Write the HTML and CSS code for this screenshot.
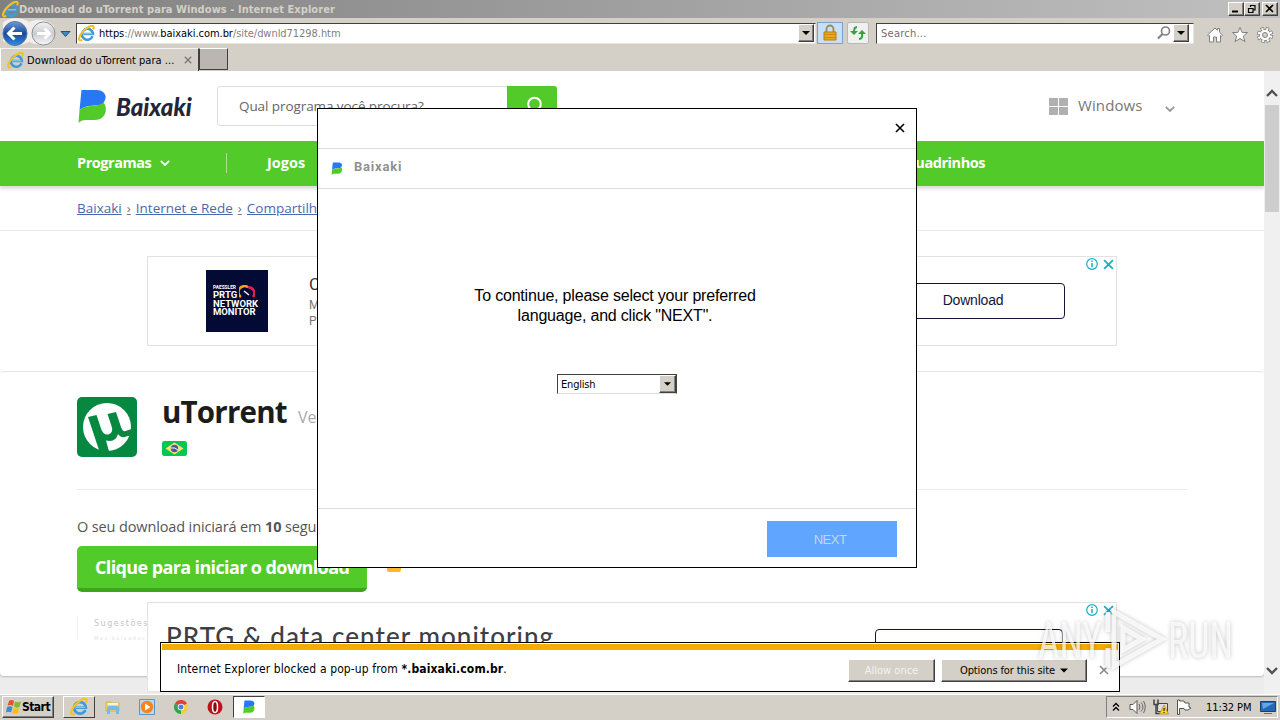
FILE: index.html
```html
<!DOCTYPE html>
<html lang="pt-BR">

<head>
    <meta charset="UTF-8">
    <meta name="viewport" content="width=device-width, initial-scale=1.0">
    <title>Download do uTorrent para Windows</title>
    <link rel="stylesheet" href="styles.css">
</head>

<body>
    <!-- shared icons -->
    <svg class="defs" width="0" height="0">
        <symbol id="ie" viewBox="0 0 18 18">
            <path d="M15.4 12A5.800 5.800 0 1 1 15.8 9.600H6" fill="none" stroke="#3f9bdc" stroke-width="2.700"/>
            <path d="M15 9.300H6" stroke="#9bd6f5" stroke-width="1"/>
            <path d="M4.500 15.800C-.5 18.2.3 12.700 4.600 7.700 9 2.500 15.200-.6 16.400 1.500c.5.9.2 2-.4 3.200" fill="none" stroke="#f4c21f" stroke-width="2.200"/>
        </symbol>
        <symbol id="bx" viewBox="0 0 28 34">
            <path d="M3 1h15c8 0 11 6 8 11-1 2-2 3-4 4-8 1-15 0-21 5z" fill="#2878f5"/>
            <path d="M1 21C7 15 17 19 25 13.500 30 20 27 31 16 31H7c-3 0-5 1-7 3z" fill="#52cb2a"/>
        </symbol>
        <symbol id="cross" viewBox="0 0 10 10">
            <path d="M1 1l8 8M9 1L1 9" fill="none" stroke="currentColor" stroke-width="1.600"/>
        </symbol>
        <symbol id="down" viewBox="0 0 8 4">
            <path d="M0 0h8L4 4z" fill="currentColor"/>
        </symbol>
        <symbol id="chevron" viewBox="0 0 10 6">
            <path d="M.8.800L5 5 9.200.8" fill="none" stroke="currentColor" stroke-width="1.800"/>
        </symbol>
        <symbol id="info" viewBox="0 0 12 12">
            <circle cx="6" cy="6" r="5.300" fill="none" stroke="currentColor" stroke-width="1.200"/>
            <path d="M6 5v4.200M6 2.600v1.400" stroke="currentColor" stroke-width="1.500"/>
        </symbol>
    </svg>

    <div class="title-bar">
        <svg class="ie-icon"><use href="#ie"/></svg>
        <span class="title-text">Download do uTorrent para Windows - Internet Explorer</span>
        <div class="win-buttons">
            <button class="win-btn"><svg width="12" height="10"><path d="M2 7.500h6" stroke="#000" stroke-width="2"/></svg></button>
            <button class="win-btn"><svg width="12" height="10"><path d="M4 1.500h5M4.500 1v2M9 1v5H7.500M2 4.500h5M2.500 4v4.500h4.500V4" fill="none" stroke="#000" stroke-width="1.200"/></svg></button>
            <button class="win-btn close"><svg width="12" height="10"><path d="M2 1l7 7M9 1L2 8" stroke="#000" stroke-width="1.700"/></svg></button>
        </div>
    </div>

    <div class="address-bar">
        <svg class="nav-arrows" width="76" height="30" viewBox="0 0 76 30">
            <defs>
                <linearGradient id="blue" x1="0" y1="0" x2="0" y2="1">
                    <stop offset="0" stop-color="#6f9bd6"/>
                    <stop offset=".5" stop-color="#164a9e"/>
                    <stop offset="1" stop-color="#2e8fe0"/>
                </linearGradient>
                <linearGradient id="silver" x1="0" y1="0" x2="0" y2="1">
                    <stop offset="0" stop-color="#f4f4f4"/>
                    <stop offset=".5" stop-color="#c9ccd0"/>
                    <stop offset="1" stop-color="#f8f8f8"/>
                </linearGradient>
            </defs>
            <path d="M3 5C8-1 22-1 29 4q14-6 25 4v14q-11 8-25 2Q16 31 3 23z" fill="#f0efed"/>
            <circle cx="15" cy="15.500" r="12" fill="url(#blue)" stroke="#5878a8"/>
            <path d="M22 15.500H9M14.500 9.500l-6 6 6 6" fill="none" stroke="#fff" stroke-width="3"/>
            <circle cx="43.500" cy="15.500" r="11.500" fill="url(#silver)" stroke="#8d9299"/>
            <path d="M37 15.500h12M44.500 10.500l5 5-5 5" fill="none" stroke="#fff" stroke-width="3"/>
            <path d="M61 13.500h9l-4.500 5z" fill="#3c8cc8" stroke="#16395c" stroke-width=".8"/>
        </svg>
        <div class="field url-field">
            <svg class="ie-icon"><use href="#ie"/></svg>
            <span class="url"><b>https</b>://www.<b>baixaki.com.br</b>/site/dwnld71298.htm</span>
            <button class="drop"><svg width="8" height="4"><use href="#down"/></svg></button>
        </div>
        <div class="tool lock">
            <svg width="16" height="18" viewBox="0 0 16 18"><path d="M4.500 8V5a3.500 3.500 0 0 1 7 0v3" fill="none" stroke="#9b8a52" stroke-width="1.800"/><path d="M2 8h12v8H2z" fill="#e9ab1d" stroke="#b57d0c"/><path d="M2 10.500h12M2 13.500h12" stroke="#c88b10"/></svg>
        </div>
        <div class="tool refresh">
            <svg width="18" height="16" viewBox="0 0 18 16"><path d="M8 2Q5 2 5 7M10 14q4 0 3-6" fill="none" stroke="#34a23a" stroke-width="2"/><path d="M1 6h8L5 10zM9 9h8L13 5z" fill="#34a23a"/></svg>
        </div>
        <div class="field search-field">
            <span class="placeholder">Search...</span>
            <svg width="14" height="14" viewBox="0 0 14 14"><circle cx="8.500" cy="5" r="4" fill="none" stroke="#808080" stroke-width="1.600"/><path d="M5.500 8L1 12.500" stroke="#808080" stroke-width="2.200"/></svg>
            <button class="drop"><svg width="8" height="4"><use href="#down"/></svg></button>
        </div>
        <div class="ie-tools">
            <svg width="18" height="18" viewBox="0 0 18 18"><path d="M1.500 9L9 2l2.500 2.300V2.500h2v3.700L16.500 9l-1.200 1.200-.8-.7V16h-4v-5h-3v5h-4V9.500l-.8.7z" fill="#fff" stroke="#808080"/></svg>
            <svg width="18" height="18" viewBox="0 0 18 18"><path d="M9 1.500l2.200 5h5.300l-4.200 3.600 1.600 5.500L9 12.500l-4.900 3.100 1.600-5.500L1.500 6.500h5.300z" fill="#fff" stroke="#808080"/></svg>
            <svg width="18" height="18" viewBox="0 0 18 18"><circle cx="9" cy="9" r="6.500" fill="none" stroke="#808080" stroke-width="3.400" stroke-dasharray="3.300 1.805"/><circle cx="9" cy="9" r="5.700" fill="#fff" stroke="#808080"/><circle cx="9" cy="9" r="6.300" fill="none" stroke="#fff" stroke-width="2.200" stroke-dasharray="2 2.948" stroke-dashoffset="-.6"/><circle cx="9" cy="9" r="2.500" fill="#d4d0c8" stroke="#808080"/></svg>
        </div>
    </div>

    <div class="tab-bar">
        <div class="tab">
            <svg class="ie-icon"><use href="#ie"/></svg>
            <span>Download do uTorrent para ...</span>
            <svg class="tab-close"><use href="#cross"/></svg>
        </div>
        <div class="new-tab"></div>
    </div>

    <div class="browser-view">
        <div class="page">
            <header class="site-header">
                <svg class="logo-mark"><use href="#bx"/></svg>
                <span class="logo-text">Baixaki</span>
                <div class="site-search">
                    <span>Qual programa você procura?</span>
                    <div class="search-btn"><svg width="18" height="20" viewBox="0 0 18 20"><circle cx="8.500" cy="8" r="6.300" fill="none" stroke="#fff" stroke-width="2"/><path d="M13 13l4 5" stroke="#fff" stroke-width="2"/></svg></div>
                </div>
                <div class="platform">
                    <div class="win-logo"><i></i><i></i><i></i><i></i></div>
                    <span>Windows</span>
                    <svg width="10" height="6"><use href="#chevron"/></svg>
                </div>
            </header>
            <nav class="site-nav">
                <span class="nav-programs">Programas</span>
                <svg width="10" height="6"><use href="#chevron"/></svg>
                <span class="nav-line"></span>
                <span class="nav-games">Jogos</span>
                <span class="nav-comics">Quadrinhos</span>
            </nav>
            <div class="breadcrumb">
                <a>Baixaki</a><u>›</u><a>Internet e Rede</a><u>›</u><a>Compartilhamento</a>
            </div>
            <div class="ad top-ad">
                <div class="prtg">
                    <span class="prtg-small">PAESSLER</span>
                    <span>PRTG</span>
                    <span>NETWORK</span>
                    <span>MONITOR</span>
                    <svg class="gauge" width="16" height="14" viewBox="0 0 16 14"><path d="M2 12A6 6 0 0 1 9 2.200" fill="none" stroke="#f5a21b" stroke-width="2.500"/><path d="M9 2.200A6 6 0 0 1 14 12" fill="none" stroke="#e5205a" stroke-width="2.500"/><path d="M5 6l5 4" stroke="#fff" stroke-width="1.500"/></svg>
                </div>
                <div class="ad-copy">
                    <span class="ad-title">Centralized</span>
                    <span>Monitor</span>
                    <span>PRTG</span>
                </div>
                <div class="ad-button">Download</div>
                <div class="ad-marks"><svg width="12" height="12"><use href="#info"/></svg><svg class="ad-x" width="11" height="11"><use href="#cross"/></svg></div>
            </div>
            <main class="card">
                <div class="product">
                    <svg class="ut-logo" width="60" height="60" viewBox="0 0 60 60">
                        <rect width="60" height="60" rx="5" fill="#078840"/>
                        <circle cx="30" cy="30" r="24" fill="#fff"/>
                        <path d="M11 20l8.500-2 5 15q3 6 8 4 4-2 2-8l-4-12 8.500-2 5 15q2 6 6 3.500l5-1.500v6.500l-4 .5q-7 3-10-2-2 7-8 7l-4-.5 4 14.500-10-2z" fill="#078840"/>
                    </svg>
                    <div class="product-info">
                        <div class="product-title"><h1>uTorrent</h1><span>Versão</span></div>
                        <svg class="flag" width="25" height="15" viewBox="0 0 25 15"><rect width="25" height="15" rx="2.500" fill="#06c653"/><path d="M12.500 1.500l9 6-9 6-9-6z" fill="#fbe36a"/><circle cx="12.500" cy="7.500" r="3.700" fill="#4b58a8"/><path d="M9 7q4-1 7 2" stroke="#fff" fill="none"/></svg>
                    </div>
                </div>
                <p class="countdown">O seu download iniciará em <b>10</b> segundos</p>
                <div class="download-row">
                    <div class="download-btn">Clique para iniciar o download</div>
                    <i class="warn"></i>
                </div>
                <div class="suggest"><span>Sugestões para</span><small>Mas baixados</small></div>
            </main>
        </div>
        <div class="scrollbar">
            <svg width="12" height="8" viewBox="0 0 12 8"><path d="M1 7l5-5 5 5" fill="none" stroke="#505050" stroke-width="2.300"/></svg>
            <div class="thumb"></div>
            <svg class="scroll-down" width="12" height="8" viewBox="0 0 12 8"><path d="M1 1l5 5 5-5" fill="none" stroke="#505050" stroke-width="2.300"/></svg>
        </div>
    </div>

    <div class="ad bottom-ad">
        <span class="bottom-title">PRTG &amp; data center monitoring</span>
        <div class="ad-button"></div>
        <div class="ad-marks"><svg width="12" height="12"><use href="#info"/></svg><svg class="ad-x" width="11" height="11"><use href="#cross"/></svg></div>
    </div>

    <div class="dialog">
        <div class="dialog-top"><svg width="10" height="10"><use href="#cross"/></svg></div>
        <div class="dialog-head"><svg width="12" height="13"><use href="#bx"/></svg><span>Baixaki</span></div>
        <div class="dialog-body">
            <p>To continue, please select your preferred<br>language, and click "NEXT".</p>
            <div class="lang-select"><span>English</span><button class="drop"><svg width="7" height="4"><use href="#down"/></svg></button></div>
        </div>
        <div class="dialog-foot"><button class="next-btn">NEXT</button></div>
    </div>

    <div class="popup-bar">
        <div class="popup-row">
            <span class="popup-text">Internet Explorer blocked a pop-up from <b>*.baixaki.com.br</b>.</span>
            <button class="classic allow">Allow once</button>
            <button class="classic options"><span>Options for this site</span><svg width="8" height="5"><use href="#down"/></svg></button>
            <svg class="popup-close" width="10" height="10"><use href="#cross"/></svg>
        </div>
    </div>

    <svg class="watermark" width="220" height="76" viewBox="0 0 220 76">
        <g fill="#fff" fill-opacity=".75" font-size="50">
            <text x="2" y="54" textLength="64" lengthAdjust="spacingAndGlyphs">ANY</text>
            <text x="132" y="54" textLength="65" lengthAdjust="spacingAndGlyphs">RUN</text>
        </g>
        <path d="M72 8v20M72 44v20M78 8v54l48-27zM87 24v22l19-11z" fill="none" stroke="#fff" stroke-opacity=".8" stroke-width="5"/>
    </svg>

    <div class="taskbar">
        <button class="start">
            <svg width="16" height="16" viewBox="0 0 16 16"><path d="M3 2q3-2 5 0L7 7Q4 5 1.500 7z" fill="#e8512b"/><path d="M9 2.500q3 1.500 6 0L13.500 8q-3 1.500-5.500-.5z" fill="#7dba3a"/><path d="M1 8q3-1.500 5.500 0L5 13.500Q3 12 0 13.500z" fill="#3a8bd8"/><path d="M7.500 8.500q3 1.500 5.700.5L12 14.500q-3 1-6-.5z" fill="#f5bd2c"/></svg>
            <span>Start</span>
        </button>
        <div class="task raised"><svg width="18" height="18"><use href="#ie"/></svg></div>
        <div class="task"><svg width="16" height="16" viewBox="0 0 16 16"><path d="M1 3h5l1 1h7v8H1z" fill="#f0d776" stroke="#d3b44d"/><path d="M3 5h10" stroke="#fff8cf" stroke-width="2"/><path d="M2 15V9q0-2 2-2h8q2 0 2 2v6h-3v-4H5v4z" fill="#76bce2"/></svg></div>
        <div class="task"><svg width="16" height="16" viewBox="0 0 16 16"><path d="M.5.500h15v15H.5z" fill="#b9d8f2" stroke="#5795cb"/><circle cx="8" cy="8" r="6.200" fill="#f0871c"/><path d="M6 4.500v7L11.500 8z" fill="#fff"/></svg></div>
        <div class="task"><svg width="14" height="14" viewBox="0 0 14 14"><path d="M7 7L.9 3.500A7 7 0 0 1 13.100 3.500z" fill="#dd4436"/><path d="M7 7l6.100-3.500A7 7 0 0 1 7 14z" fill="#f6ce35"/><path d="M7 7v7A7 7 0 0 1 .9 3.500z" fill="#33a352"/><circle cx="7" cy="7" r="3.300" fill="#fff"/><circle cx="7" cy="7" r="2.500" fill="#4284ee"/></svg></div>
        <div class="task"><svg width="16" height="16" viewBox="0 0 16 16"><circle cx="8" cy="8" r="7.500" fill="#c01019"/><ellipse cx="8" cy="8" rx="2.500" ry="5.500" fill="#8e0710" stroke="#fff" stroke-width="1.500"/></svg></div>
        <div class="task active"><svg width="12" height="14"><use href="#bx"/></svg></div>
        <div class="tray">
            <svg width="8" height="10" viewBox="0 0 8 10"><path d="M1 4.500l3-3 3 3M1 8.500l3-3 3 3" fill="none" stroke="#000" stroke-width="1.300"/></svg>
            <svg class="volume" width="17" height="16" viewBox="0 0 17 16"><path d="M1 5.500h3l4-4v13l-4-4H1z" fill="#fff" stroke="#555"/><path d="M10 5q2 3 0 6M12 3.500q4 4.500 0 9M14.500 2q3.500 6 0 12" fill="none" stroke="#666"/></svg>
            <svg class="network" width="16" height="16" viewBox="0 0 16 16"><path d="M4.500 4.500h10v8h-10z" fill="#ddd" stroke="#444"/><path d="M1 .5v5h4v-5M3 5.500v9h4" fill="none" stroke="#444" stroke-width="1.500"/><path d="M11 6l4.500 9h-9z" fill="#ffd42a" stroke="#a98508" stroke-width=".7"/><path d="M11 9v3M11 13v1" stroke="#000"/></svg>
            <svg class="flag-icon" width="16" height="16" viewBox="0 0 16 16"><path d="M1.500 1v14.500h2V9.500H8l1 1.500q3 1 6-2l-2-1V4H9L8 2H3.500V1z" fill="#fff" stroke="#555"/></svg>
            <span class="clock">11:32 PM</span>
            <svg class="desktop" width="16" height="15" viewBox="0 0 16 15"><path d="M.5 1.500h15v10H.5z" fill="#2468b8" stroke="#184071"/><path d="M2 3h12L3 9z" fill="#62a8e8"/><path d="M4 13.500h8" stroke="#486" stroke-width="1"/></svg>
        </div>
    </div>
</body>

</html>
```
FILE: styles.css
```css
* {
    box-sizing: border-box;
}

body {
    margin: 0;
    width: 1280px;
    height: 720px;
    overflow: hidden;
    position: relative;
    background-color: #d4d0c8;
    font-family: "DejaVu Sans Condensed", "DejaVu Sans", sans-serif;
    font-stretch: condensed;
    font-size: 11px;
    color: #000;
    white-space: nowrap;
}

svg {
    display: block;
    flex-shrink: 0;
}

.defs {
    position: absolute;
}

button {
    padding: 0;
    font: inherit;
    color: #000;
    background-color: #d4d0c8;
    border: 1px solid;
    border-color: #fff #404040 #404040 #fff;
    box-shadow: inset -1px -1px #808080;
    display: flex;
    align-items: center;
    justify-content: center;
}

.ie-icon {
    width: 17px;
    height: 17px;
}

/* browser chrome */
.title-bar {
    height: 18px;
    display: flex;
    align-items: center;
    padding: 0 2px;
    background: linear-gradient(90deg, #808080, #c0c0c0);
    color: #d4d0c8;
    font-weight: bold;
}

.title-text {
    letter-spacing: 0.06px;
}

.win-buttons {
    margin-left: auto;
    display: flex;
}

.win-btn {
    width: 16px;
    height: 14px;
}

.win-btn.close {
    margin-left: 2px;
}

.address-bar {
    height: 30px;
    display: flex;
    align-items: center;
}

.field {
    height: 21px;
    display: flex;
    align-items: center;
    background-color: #fff;
    border: 1px solid;
    border-color: #404040 #e8e5df #e8e5df #404040;
}

.url-field {
    width: 740px;
    padding: 0 1px;
}

.url {
    margin-left: 4px;
    letter-spacing: -0.05px;
    color: #808080;
}

.url b {
    color: #000;
    font-weight: normal;
}

.drop {
    width: 16px;
    height: 18px;
    margin-left: auto;
}

.tool {
    width: 26px;
    height: 22px;
    margin-left: 1px;
    display: flex;
    align-items: center;
    justify-content: center;
    border: 1px solid #7da2ce;
    background-color: #c9dff8;
}

.tool.refresh {
    width: 22px;
    margin-left: 4px;
    border-color: #b9b9b9;
    border-radius: 2px;
    background-color: #f0f0f0;
}

.search-field {
    width: 318px;
    margin-left: 7px;
    padding-right: 4px;
}

.placeholder {
    margin-left: 4px;
    margin-right: auto;
    color: #707070;
    letter-spacing: 0.25px;
}

.search-field .drop {
    margin-left: 2px;
}

.ie-tools {
    display: flex;
    gap: 7px;
    margin: 3px 0 0 12px;
}

.tab-bar {
    height: 23px;
    display: flex;
}

.tab {
    width: 199px;
    display: flex;
    align-items: center;
    padding: 0 6px;
    border-left: 1px solid #fff;
    border-top: 1px solid #f5f3ef;
    border-right: 1px solid #404040;
}

.tab span {
    margin-left: 3px;
    letter-spacing: 0.03px;
}

.tab-close {
    width: 8px;
    height: 8px;
    margin-left: auto;
    color: #777;
}

.new-tab {
    width: 29px;
    height: 22px;
    background-color: #bcb6b0;
    border: 1px solid #404040;
    border-top-color: #fff;
}

/* page */
.browser-view {
    height: 623px;
    display: flex;
    background-color: #ececec;
}

.page {
    width: 1264px;
    height: 605px;
    background-color: #fff;
    font-family: "Open Sans", sans-serif;
    font-stretch: normal;
    border-radius: 0 0 4px 4px;
    box-shadow: 0 1px 2px #bbb;
}

.site-header {
    height: 70px;
    padding-left: 78px;
    display: flex;
    align-items: center;
}

.logo-mark {
    width: 29px;
    height: 34px;
}

.logo-text {
    margin-left: 9px;
    width: 101px;
    font: italic 900 24px "Lato", sans-serif;
    letter-spacing: 0;
    color: #23263a;
}

.site-search {
    width: 340px;
    height: 40px;
    padding-left: 21px;
    display: flex;
    align-items: center;
    border: 1px solid #ddd;
    border-radius: 3px;
    font-size: 13.500px;
    letter-spacing: -0.08px;
    color: #666;
}

.search-btn {
    width: 50px;
    height: 40px;
    margin-left: auto;
    margin-right: -1px;
    display: flex;
    align-items: center;
    justify-content: center;
    padding-left: 5px;
    background-color: #52cb2a;
    border-radius: 0 3px 3px 0;
}

.platform {
    margin-left: 492px;
    display: flex;
    align-items: center;
    font-size: 15px;
    color: #777;
}

.platform span {
    width: 77px;
    margin: -2px 10px 0;
    letter-spacing: 0.1px;
}

.platform > svg {
    margin-top: 6px;
    color: #999;
}

.win-logo {
    display: grid;
    grid-template-columns: 9px 9px;
    grid-template-rows: 8px 8px;
    gap: 1px;
}

.win-logo i {
    background-color: #b0b0b0;
}

.site-nav {
    position: relative;
    height: 45px;
    padding: 0 0 2px 77px;
    display: flex;
    align-items: center;
    background-color: #52cb2a;
    box-shadow: 0 3px 3px #ddd;
    color: #fff;
    font-size: 14.500px;
    font-weight: bold;
    letter-spacing: -0.45px;
}

.nav-programs {
    width: 83px;
}

.nav-line {
    width: 1px;
    height: 20px;
    margin: 0 40px 0 56px;
    background-color: #a5e58f;
}

.nav-games {
    letter-spacing: 0;
}

.nav-comics {
    margin-left: auto;
    margin-right: 279px;
}

.breadcrumb {
    height: 45px;
    padding-left: 77px;
    display: flex;
    align-items: center;
    border-bottom: 1px solid #e9e9e9;
    font-size: 13.500px;
    letter-spacing: 0;
    color: #777;
}

.breadcrumb a {
    color: #4a68b0;
    text-decoration: underline;
}

.breadcrumb u {
    margin: 0 5px;
}

.ad {
    width: 970px;
    height: 90px;
    position: relative;
    display: flex;
    border: 1px solid #e2e2e2;
    background-color: #fff;
}

.top-ad {
    margin: 25px 0 0 147px;
    padding-left: 58px;
    align-items: center;
}

.prtg {
    position: relative;
    width: 62px;
    height: 62px;
    padding: 15px 0 0 7px;
    display: flex;
    flex-direction: column;
    background-color: #030b35;
    color: #fff;
    font: bold 9.500px/8.500px "Roboto", sans-serif;
}

.prtg .prtg-small {
    font-size: 4.800px;
    line-height: 6px;
}

.gauge {
    position: absolute;
    left: 33px;
    top: 15px;
}

.ad-copy {
    width: 568px;
    padding-left: 41px;
    display: flex;
    flex-direction: column;
    font: 12px/16px "Roboto", sans-serif;
    color: #777;
}

.ad-copy .ad-title {
    margin-bottom: 3px;
    font-size: 17px;
    line-height: 20px;
    color: #333;
}

.ad-button {
    width: 188px;
    height: 36px;
    margin-left: auto;
    margin-right: 51px;
    padding: 0 0 2px 4px;
    display: flex;
    align-items: center;
    justify-content: center;
    border: 1px solid #11163a;
    border-radius: 4px;
    font: 14px "Liberation Sans", sans-serif;
    letter-spacing: -0.2px;
    color: #11163a;
}

.ad-marks {
    position: absolute;
    right: 2px;
    top: 1px;
    display: flex;
    align-items: center;
    gap: 5px;
    color: #12b1c4;
}

.card {
    margin-top: 25px;
    padding: 25px 77px 0;
    border-top: 1px solid #e6e6e6;
    border-radius: 4px;
}

.product {
    height: 93px;
    display: flex;
    border-bottom: 1px solid #ebebeb;
}

.product-info {
    margin-left: 25px;
}

.product-title {
    height: 44px;
    display: flex;
    align-items: baseline;
    margin-top: -6px;
}

.product-title h1 {
    width: 136px;
    margin: 0;
    font-size: 29.500px;
    letter-spacing: -0.8px;
    color: #1c1c1c;
}

.product-title span {
    font-size: 16px;
    color: #aaa;
}

.flag {
    margin-top: 6px;
}

.countdown {
    margin: 26px 0 0;
    font-size: 14.500px;
    line-height: 22px;
    letter-spacing: -0.13px;
    color: #555;
}

.download-row {
    display: flex;
    align-items: center;
    margin-top: 8px;
}

.download-btn {
    width: 290px;
    height: 46px;
    padding-left: 18px;
    font-size: 18px;
    font-weight: bold;
    line-height: 42px;
    letter-spacing: -0.62px;
    color: #fff;
    background-color: #52cb2a;
    border-bottom: 4px solid #3da51c;
    border-radius: 5px;
}

.warn {
    width: 14px;
    height: 10px;
    margin: -5px 0 0 20px;
    background-color: #fbb829;
    border-radius: 2px;
}

.suggest {
    height: 23px;
    margin-top: 24px;
    padding-left: 16px;
    display: flex;
    flex-direction: column;
    border-left: 1px solid #f2f2f2;
    font: 8px/16px "DejaVu Sans", sans-serif;
    letter-spacing: 1.500px;
    color: #c4c4c4;
}

.suggest small {
    font-size: 5px;
    line-height: 12px;
    color: #e2e2e2;
}

.scrollbar {
    width: 16px;
    display: flex;
    flex-direction: column;
    align-items: center;
    padding-top: 18px;
    background-color: #f0f0f0;
}

.thumb {
    width: 14px;
    height: 107px;
    margin-top: 8px;
    background-color: #cdcdcd;
}

.scroll-down {
    margin-top: auto;
    margin-bottom: 19px;
}

/* overlays */
.bottom-ad {
    position: absolute;
    left: 147px;
    top: 602px;
}

.bottom-title {
    margin: 17px 0 0 18px;
    font: 500 26px/32px "Lato", sans-serif;
    letter-spacing: 1.060px;
    color: #3c4043;
}

.bottom-ad .ad-button {
    margin-top: 26px;
    margin-right: 53px;
}

.dialog {
    position: absolute;
    left: 317px;
    top: 108px;
    width: 600px;
    height: 460px;
    display: flex;
    flex-direction: column;
    border: 1px solid #000;
    background-color: #fff;
}

.dialog-top {
    height: 40px;
    padding: 14px 11px 0 0;
    display: flex;
    justify-content: flex-end;
    border-bottom: 1px solid #ddd;
}

.dialog-head {
    height: 40px;
    padding-left: 13px;
    display: flex;
    align-items: center;
    border-bottom: 1px solid #ddd;
    color: #909090;
    font: bold 13px "Roboto", sans-serif;
    letter-spacing: 0.8px;
}

.dialog-head span {
    margin-left: 11px;
    margin-bottom: 5px;
}

.dialog-body {
    flex: 1;
    display: flex;
    flex-direction: column;
    align-items: center;
}

.dialog-body p {
    margin: 97px 0 0;
    padding-right: 4px;
    text-align: center;
    font: 16px/20px "Liberation Sans", Arial, sans-serif;
    letter-spacing: -0.19px;
}

.lang-select {
    width: 120px;
    height: 20px;
    margin-top: 48px;
    padding-left: 3px;
    display: flex;
    align-items: center;
    border: 1px solid #404040;
    border-bottom-color: #ddd;
    font-size: 11px;
    letter-spacing: -0.2px;
}

.lang-select span {
    margin-top: 1px;
}

.lang-select .drop {
    width: 17px;
}

.dialog-foot {
    height: 59px;
    padding: 12px 19px 0;
    display: flex;
    justify-content: flex-end;
    border-top: 1px solid #ddd;
}

.next-btn {
    width: 130px;
    height: 36px;
    padding-right: 4px;
    border: none;
    box-shadow: none;
    background-color: #60a5ff;
    color: #c5d5e8;
    font: 13px "Liberation Sans", Arial, sans-serif;
    letter-spacing: -0.5px;
}

.popup-bar {
    position: absolute;
    left: 160px;
    top: 642px;
    width: 960px;
    height: 50px;
    padding: 1px;
    border: 1px solid #000;
    background-color: #fff;
}

.popup-row {
    height: 46px;
    padding: 0 9px 0 15px;
    border-top: 6px solid #f5ab00;
    display: flex;
    align-items: center;
}

.popup-text {
    margin: -2px auto 0 0;
    font-size: 12px;
    letter-spacing: 0.12px;
}

.classic {
    height: 23px;
    font-size: 11px;
}

.classic.allow {
    width: 87px;
    margin-right: 6px;
    color: #f4f2ee;
}

.classic.options {
    width: 146px;
    gap: 5px;
    letter-spacing: -0.1px;
}

.popup-close {
    margin-left: 12px;
    color: #888;
}

.watermark {
    position: absolute;
    left: 1036px;
    top: 604px;
    font-family: "Roboto", sans-serif;
    filter: drop-shadow(0 0 2px rgba(0, 0, 0, 0.3));
}

/* taskbar */
.taskbar {
    height: 26px;
    padding: 1px 2px 2px;
    display: flex;
    border-top: 1px solid #fff;
}

.start {
    width: 52px;
    height: 22px;
    margin-right: 9px;
    gap: 0;
    font-size: 12px;
    font-weight: bold;
    letter-spacing: -0.5px;
}

.task {
    width: 32px;
    height: 22px;
    margin-right: 2px;
    display: flex;
    align-items: center;
    justify-content: center;
}

.task.raised {
    border: 1px solid;
    border-color: #fff #404040 #404040 #fff;
}

.task.active {
    background-color: #fff;
    border: 1px solid;
    border-color: #404040 #fff #fff #404040;
}

.tray {
    width: 172px;
    height: 22px;
    margin-left: auto;
    padding: 0 1px 0 5px;
    display: flex;
    align-items: center;
    border: 1px solid;
    border-color: #808080 #fff #fff #808080;
}

.tray .volume {
    margin-left: 9px;
}

.tray .network,
.tray .flag-icon {
    margin-left: 7px;
}

.clock {
    margin-left: 14px;
    letter-spacing: -0.1px;
}

.desktop {
    margin-left: auto;
}
```
